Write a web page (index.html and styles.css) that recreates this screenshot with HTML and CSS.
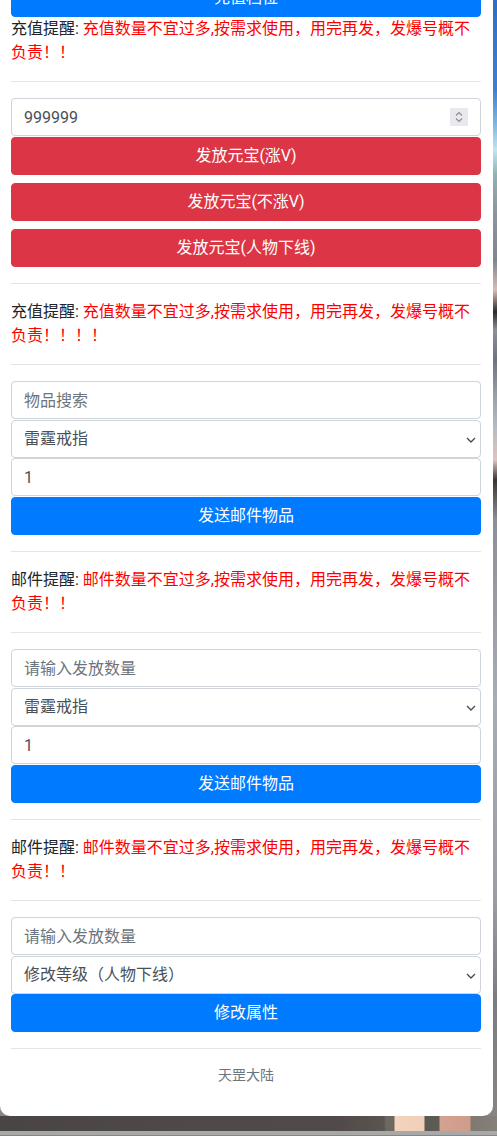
FILE: index.html
```html
<!DOCTYPE html>
<html lang="zh-CN">
<head>
<meta charset="utf-8">
<title>天罡大陆</title>
<link rel="stylesheet" href="styles.css">
</head>
<body>
<div class="card">
  <button class="btn btn-blue">充值档位</button>
  <div class="notice">充值提醒: <span class="warn">充值数量不宜过多,按需求使用，用完再发，发爆号概不负责！！</span></div>
  <hr class="rule">
  <div class="field">
    <input class="control input" type="number" value="999999">
    <span class="spin"><svg width="18" height="18" viewBox="0 0 18 18"><path d="M6 7.5 9 4.5 12 7.5M6 10.5 9 13.5 12 10.5" fill="none" stroke="#8a8a94" stroke-width="1.1"/></svg></span>
  </div>
  <button class="btn btn-red">发放元宝(涨V)</button>
  <button class="btn btn-red gap">发放元宝(不涨V)</button>
  <button class="btn btn-red gap">发放元宝(人物下线)</button>
  <hr class="rule">
  <div class="notice">充值提醒: <span class="warn">充值数量不宜过多,按需求使用，用完再发，发爆号概不负责！！！！</span></div>
  <hr class="rule">
  <input class="control input" type="text" placeholder="物品搜索">
  <div class="field">
    <select class="control select"><option>雷霆戒指</option></select>
    <svg class="chev" width="10" height="6" viewBox="0 0 10 6"><path d="M1 1 5 5 9 1" fill="none" stroke="#4a4f55" stroke-width="1.4"/></svg>
  </div>
  <input class="control input" type="text" value="1">
  <button class="btn btn-blue">发送邮件物品</button>
  <hr class="rule">
  <div class="notice">邮件提醒: <span class="warn">邮件数量不宜过多,按需求使用，用完再发，发爆号概不负责！！</span></div>
  <hr class="rule">
  <input class="control input" type="text" placeholder="请输入发放数量">
  <div class="field">
    <select class="control select"><option>雷霆戒指</option></select>
    <svg class="chev" width="10" height="6" viewBox="0 0 10 6"><path d="M1 1 5 5 9 1" fill="none" stroke="#4a4f55" stroke-width="1.4"/></svg>
  </div>
  <input class="control input" type="text" value="1">
  <button class="btn btn-blue">发送邮件物品</button>
  <hr class="rule">
  <div class="notice">邮件提醒: <span class="warn">邮件数量不宜过多,按需求使用，用完再发，发爆号概不负责！！</span></div>
  <hr class="rule">
  <input class="control input" type="text" placeholder="请输入发放数量">
  <div class="field">
    <select class="control select"><option>修改等级（人物下线）</option></select>
    <svg class="chev" width="10" height="6" viewBox="0 0 10 6"><path d="M1 1 5 5 9 1" fill="none" stroke="#4a4f55" stroke-width="1.4"/></svg>
  </div>
  <button class="btn btn-blue">修改属性</button>
  <hr class="rule">
  <div class="footer">天罡大陆</div>
</div>
<div class="scene"></div>
<div class="bar"></div>
</body>
</html>
```

FILE: styles.css
```css
html, body {
  margin: 0;
  padding: 0;
}
body {
  width: 497px;
  height: 1136px;
  overflow: hidden;
  font-family: Roboto, "Noto Sans CJK SC", sans-serif;
  font-size: 16px;
  line-height: 1.5;
  color: #212529;
  background: linear-gradient(to bottom,
    #2f6fc4 0px, #3d80d0 90px, #7fb8e4 125px, #bfe6f0 150px,
    #8fb3b0 175px, #8c949c 215px, #7d8690 260px, #d9bcb4 290px,
    #2a2a2a 312px, #8c9098 330px, #6e747c 360px, #9ea4ac 400px,
    #b8bcc4 430px, #e0c4bc 460px, #3a3636 480px, #8e8e96 520px,
    #a8acb4 700px, #9c9ca4 900px, #7c7c80 1000px, #8a8580 1136px);
}
.card {
  width: 470px;
  margin-top: -21px;
  padding: 0 12px 30px 11px;
  background: #fff;
  border-radius: 0 0 10px 10px;
  display: flex;
  flex-direction: column;
}
.btn {
  display: block;
  width: 100%;
  height: 38px;
  padding: 6px 12px;
  border: 1px solid transparent;
  border-radius: 4px;
  font-family: inherit;
  font-size: 16px;
  line-height: 24px;
  color: #fff;
  text-align: center;
  margin: 0;
}
.btn-blue {
  background: #007bff;
  border-color: #007bff;
}
.btn-red {
  background: #dc3545;
  border-color: #dc3545;
}
.gap {
  margin-top: 8px;
}
.notice {
  font-size: 16px;
  line-height: 24px;
}
.warn {
  color: #ff0000;
}
.rule {
  width: 100%;
  margin: 16px 0;
  border: 0;
  border-top: 1px solid rgba(0, 0, 0, 0.1);
  height: 0;
}
.field {
  position: relative;
}
.control {
  display: block;
  width: 100%;
  height: 38px;
  box-sizing: border-box;
  padding: 6px 12px;
  border: 1px solid #ced4da;
  border-radius: 4px;
  background: #fff;
  font-family: inherit;
  font-size: 16px;
  line-height: 24px;
  color: #495057;
  margin: 0;
  outline: none;
}
.input {
  margin-bottom: 1px;
}
.field .input {
  margin-bottom: 1px;
}
.control::placeholder {
  color: #6c757d;
  opacity: 1;
}
.select {
  -webkit-appearance: none;
  appearance: none;
  padding-right: 28px;
}
.input::-webkit-inner-spin-button,
.input::-webkit-outer-spin-button {
  -webkit-appearance: none;
  margin: 0;
}
.spin {
  position: absolute;
  left: 439px;
  top: 10px;
  width: 18px;
  height: 18px;
  background: #e9e9ed;
  display: block;
}
.spin svg {
  display: block;
}
.chev {
  position: absolute;
  left: 455px;
  top: 17px;
  pointer-events: none;
}
.footer {
  padding-top: 0;
  font-size: 14px;
  line-height: 21px;
  color: #6c757d;
  text-align: center;
}
.scene {
  width: 497px;
  height: 15px;
  background: linear-gradient(to right,
    #4a4545 0px, #4f4949 200px, #514a4a 340px, #5a5550 384px,
    #6d6960 386px, #6d6960 394px, #f3d4be 395px, #f0cfb8 424px,
    #5b5954 425px, #5e5b55 439px, #d4a290 440px, #cf9c8c 470px,
    #7e7a72 471px, #84807a 497px);
}
.bar {
  width: 497px;
  height: 4px;
  background: #a8a8a8;
}
```
